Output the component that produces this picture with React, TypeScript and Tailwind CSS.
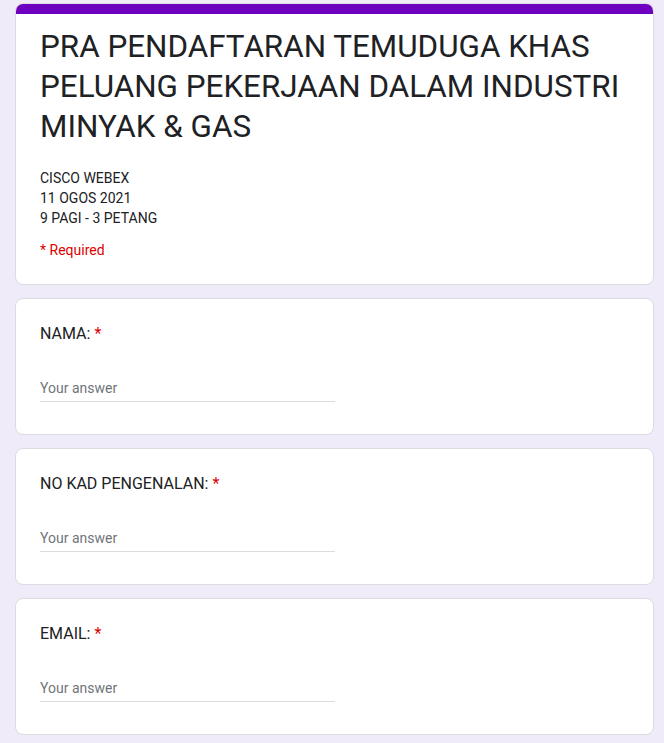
const questions = ['NAMA:', 'NO KAD PENGENALAN:', 'EMAIL:']

function QuestionCard({ label }: { label: string }) {
  return (
    <div className="h-[137px] rounded-lg border border-[#dadce0] bg-white px-6 pt-[23px]">
      <div className="text-[16px] leading-6 text-[#202124]">
        {label} <span className="text-[#e00000]">*</span>
      </div>
      <div className="mt-[32px] w-[295px] border-b border-[#dadce0] pb-[3px] text-[14px] leading-5 text-[#70757a]">
        Your answer
      </div>
    </div>
  )
}

export default function App() {
  return (
    <div
      className="min-h-[743px] bg-[#f0ebf8] pt-[3px] pl-[15px]"
      style={{ fontFamily: 'Roboto, "Liberation Sans", sans-serif' }}
    >
      <div className="flex w-[639px] flex-col gap-[13px] pb-3">
        {/* Header */}
        <div className="overflow-hidden rounded-lg border border-[#dadce0] bg-white">
          <div className="h-[10px] bg-[#6e00c0]" />
          <div className="h-[270px] px-6 pt-[13px]">
            <h1 className="whitespace-nowrap text-[31.4px] leading-10 text-[#202124]">
              PRA PENDAFTARAN TEMUDUGA KHAS
              <br />
              PELUANG PEKERJAAN DALAM INDUSTRI
              <br />
              MINYAK &amp; GAS
            </h1>
            <div className="mt-[21px] text-[14px] leading-5 text-[#202124]">
              <div>CISCO WEBEX</div>
              <div>11 OGOS 2021</div>
              <div>9 PAGI - 3 PETANG</div>
            </div>
            <div className="mt-[12px] text-[14px] leading-5 text-[#e00000]">* Required</div>
          </div>
        </div>

        {questions.map(q => (
          <QuestionCard key={q} label={q} />
        ))}
      </div>
    </div>
  )
}
